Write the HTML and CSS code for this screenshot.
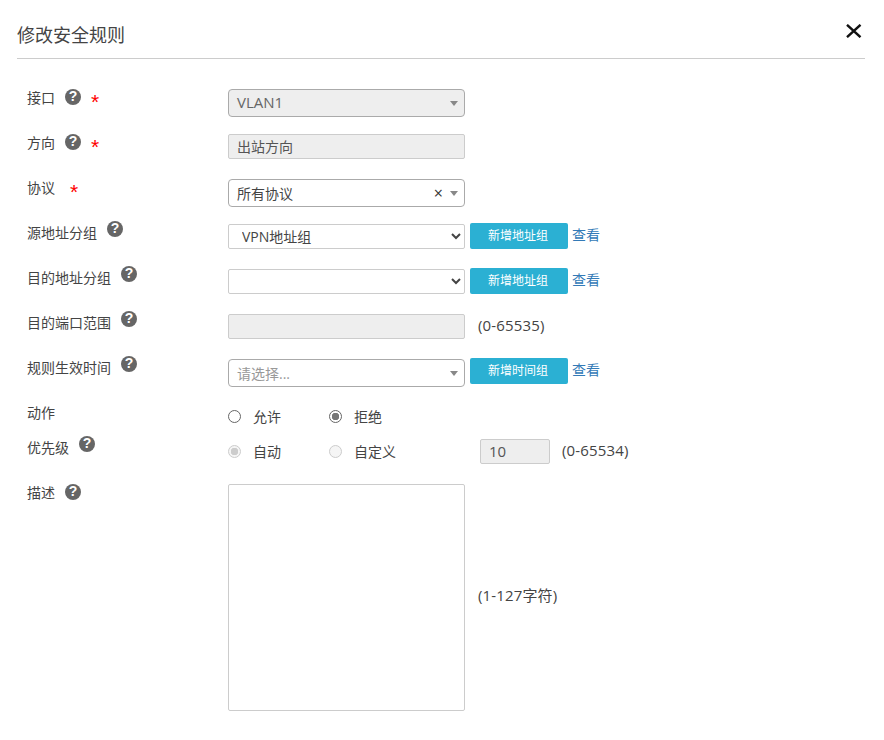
FILE: index.html
```html
<!DOCTYPE html>
<html lang="zh-CN">
<head>
    <meta charset="UTF-8">
    <meta name="viewport" content="width=device-width, initial-scale=1.0">
    <title>修改安全规则</title>
    <link rel="stylesheet" href="styles.css">
</head>
<body>
    <div class="dialog">
        <div class="dialog-header">
            <h4>修改安全规则</h4>
            <button class="close-btn" type="button" aria-label="关闭">
                <svg width="16" height="14" viewBox="0 0 16 14"><path d="M1 0.8 L14.5 13.2 M14.5 0.8 L1 13.2" stroke="#111" stroke-width="2.4" fill="none"/></svg>
            </button>
        </div>

        <form class="rule-form">
            <div class="form-row">
                <div class="form-label">接口<span class="help">?</span><span class="required">*</span></div>
                <div class="combo combo-disabled">
                    <span class="combo-text">VLAN1</span>
                    <span class="combo-arrow"></span>
                </div>
            </div>

            <div class="form-row">
                <div class="form-label">方向<span class="help">?</span><span class="required">*</span></div>
                <input class="text-input wide" type="text" value="出站方向" disabled>
            </div>

            <div class="form-row">
                <div class="form-label">协议<span class="required no-help">*</span></div>
                <div class="combo">
                    <span class="combo-text">所有协议</span>
                    <span class="combo-clear">×</span>
                    <span class="combo-arrow"></span>
                </div>
            </div>

            <div class="form-row">
                <div class="form-label">源地址分组<span class="help raised">?</span></div>
                <select class="native-select">
                    <option>VPN地址组</option>
                </select>
                <button class="add-btn" type="button">新增地址组</button>
                <a class="view-link" href="#">查看</a>
            </div>

            <div class="form-row">
                <div class="form-label">目的地址分组<span class="help raised">?</span></div>
                <select class="native-select">
                    <option></option>
                </select>
                <button class="add-btn" type="button">新增地址组</button>
                <a class="view-link" href="#">查看</a>
            </div>

            <div class="form-row">
                <div class="form-label">目的端口范围<span class="help raised">?</span></div>
                <input class="text-input wide" type="text" disabled>
                <span class="hint">(0-65535)</span>
            </div>

            <div class="form-row">
                <div class="form-label">规则生效时间<span class="help raised">?</span></div>
                <div class="combo">
                    <span class="combo-text placeholder">请选择...</span>
                    <span class="combo-arrow"></span>
                </div>
                <button class="add-btn" type="button">新增时间组</button>
                <a class="view-link" href="#">查看</a>
            </div>

            <div class="form-row short">
                <div class="form-label">动作</div>
                <div class="radio-group">
                    <label class="radio-item"><input type="radio" name="action"><span>允许</span></label>
                    <label class="radio-item"><input type="radio" name="action" checked><span>拒绝</span></label>
                </div>
            </div>

            <div class="form-row">
                <div class="form-label">优先级<span class="help raised">?</span></div>
                <div class="radio-group">
                    <label class="radio-item"><input type="radio" name="priority" checked disabled><span>自动</span></label>
                    <label class="radio-item"><input type="radio" name="priority" disabled><span>自定义</span></label>
                </div>
                <input class="text-input priority-input" type="text" value="10" disabled>
                <span class="hint priority-hint">(0-65534)</span>
            </div>

            <div class="form-row desc-row">
                <div class="form-label">描述<span class="help">?</span></div>
                <textarea class="desc-input"></textarea>
                <span class="hint desc-hint">(1-127字符)</span>
            </div>
        </form>
    </div>
</body>
</html>
```

FILE: styles.css
```css
body {
    margin: 0;
    background: white;
    color: #444;
    font-family: "Open Sans", "Noto Sans CJK SC", sans-serif;
    font-size: 14px;
}
.dialog {
    padding: 0 19px 0 17px;
}
.dialog-header {
    display: flex;
    justify-content: space-between;
    height: 58px;
    border-bottom: 1px solid #ccc;
}
.dialog-header h4 {
    margin: 0;
    padding-top: 22px;
    font-size: 18px;
    font-weight: normal;
    line-height: 26px;
    color: #444;
}
.close-btn {
    width: 16px;
    height: 14px;
    margin: 24px 3px 0 0;
    padding: 0;
    border: none;
    background: none;
}
.rule-form {
    padding-top: 30px;
}
.form-row {
    display: flex;
    align-items: flex-start;
    height: 45px;
}
.form-row.short {
    height: 35px;
}
.form-row.desc-row {
    align-items: center;
    height: 227px;
}
.form-label {
    display: flex;
    flex: none;
    align-items: flex-start;
    width: 201px;
    padding-left: 10px;
    line-height: 18px;
}
.desc-row .form-label {
    align-self: flex-start;
}
.help {
    width: 16px;
    height: 16px;
    margin-left: 10px;
    border-radius: 50%;
    background: #666;
    color: white;
    font-family: "Liberation Sans", sans-serif;
    font-size: 14px;
    font-weight: bold;
    line-height: 15px;
    text-align: center;
}
.help.raised {
    margin-top: -3px;
}
.required {
    margin-left: 10px;
    color: #f00;
    font-family: "Liberation Sans", sans-serif;
    font-size: 21px;
    font-weight: normal;
    line-height: 26px;
}
.required.no-help {
    margin-left: 15px;
}
.combo {
    display: flex;
    flex: none;
    align-items: center;
    box-sizing: border-box;
    width: 237px;
    height: 28px;
    padding: 0 6px 0 8px;
    border: 1px solid #aaa;
    border-radius: 4px;
    background: white;
}
.combo-disabled {
    background: #eee;
}
.combo-text {
    flex: 1;
    color: #444;
}
.combo-disabled .combo-text {
    padding-bottom: 2px;
    color: #666;
    font-size: 15px;
}
.combo-text.placeholder {
    color: #999;
}
.combo-clear {
    margin-right: 7px;
    color: #333;
    font-size: 16px;
    line-height: 18px;
}
.combo-arrow {
    width: 0;
    height: 0;
    border-top: 5px solid #888;
    border-right: 4px solid transparent;
    border-left: 4px solid transparent;
}
.text-input {
    box-sizing: border-box;
    height: 25px;
    padding: 0 8px 2px;
    border: 1px solid #ccc;
    border-radius: 2px;
    background: #eee;
    color: #555;
    font-family: inherit;
    font-size: 14px;
}
.text-input.wide {
    flex: none;
    width: 237px;
}
.native-select {
    flex: none;
    box-sizing: border-box;
    width: 237px;
    height: 25px;
    padding: 0 9px;
    border: 1px solid #ccc;
    border-radius: 2px;
    background: white;
    color: #444;
    font-family: inherit;
    font-size: 14px;
}
.add-btn {
    flex: none;
    width: 98px;
    height: 26px;
    margin: -1px 0 0 5px;
    padding: 0 2px 2px 0;
    border: none;
    border-radius: 2px;
    background: #2bb0d3;
    color: white;
    font-family: inherit;
    font-size: 12px;
}
.view-link {
    margin-left: 4px;
    color: #337ab7;
    line-height: 21px;
    text-decoration: none;
}
.hint {
    margin-left: 13px;
    font-size: 15px;
    letter-spacing: 0.15px;
    line-height: 22px;
}
.priority-hint {
    margin-left: 12px;
}
.desc-hint {
    margin-bottom: 5px;
}
.radio-group {
    display: flex;
    flex: none;
    width: 252px;
    height: 25px;
}
.radio-item {
    display: flex;
    align-items: center;
    width: 101px;
    height: 25px;
}
.radio-item span {
    margin-bottom: 2px;
}
.radio-item input {
    appearance: none;
    box-sizing: border-box;
    width: 13px;
    height: 13px;
    margin: 0 12px 0 0;
    border: 1px solid #666;
    border-radius: 50%;
    background: white;
}
.radio-item input:checked {
    background: radial-gradient(circle, #777 0 3.5px, white 4px);
}
.radio-item input:disabled {
    border-color: #ccc;
    background: #f5f5f5;
}
.radio-item input:disabled:checked {
    background: radial-gradient(circle, #ccc 0 3.5px, #f5f5f5 4px);
}
.priority-input {
    flex: none;
    width: 70px;
    font-size: 15px;
}
.desc-input {
    flex: none;
    box-sizing: border-box;
    width: 237px;
    height: 227px;
    border: 1px solid #ccc;
    border-radius: 2px;
    background: white;
    resize: none;
}
```
